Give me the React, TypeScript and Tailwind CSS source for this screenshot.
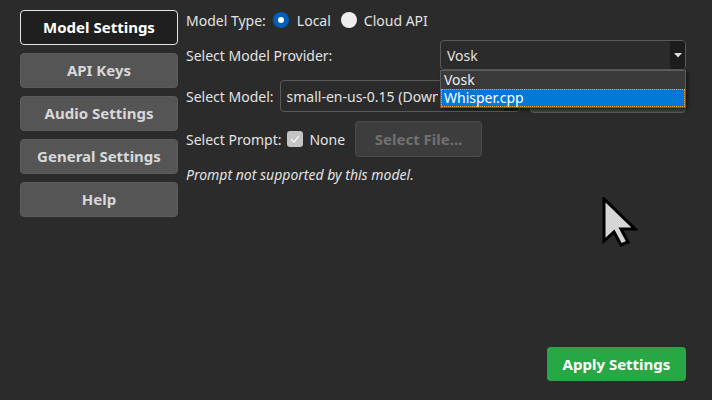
import React from "react";

const navItems = [
  "Model Settings",
  "API Keys",
  "Audio Settings",
  "General Settings",
  "Help",
];

const Cursor: React.FC = () => (
  <svg width="36" height="50" viewBox="0 0 36 50" className="absolute left-[602px] top-[197px]">
    <path
      d="M2 2 L2 44 L12 35 L19 48 L26 45 L19 32 L33 32 Z"
      fill="#d6d6d6"
      stroke="#000"
      strokeWidth="3"
      strokeLinejoin="miter"
    />
  </svg>
);

const App: React.FC = () => {
  return (
    <div
      className="relative flex w-[712px] h-[400px] overflow-hidden bg-[#2b2b2b] text-[14px] text-[#e2e2e2]"
      style={{ fontFamily: '"Noto Sans", "Open Sans", sans-serif' }}
    >
      {/* Sidebar */}
      <div className="flex flex-col gap-[8px] pt-[10px] pl-[20px] w-[178px] shrink-0">
        {navItems.map((item, i) => (
          <button
            key={item}
            className={
              i === 0
                ? "h-[35px] w-[158px] rounded-[4px] border border-[#e6e6e6] bg-[#1f1f1f] text-[15px] font-bold text-white"
                : "h-[35px] w-[158px] rounded-[4px] border border-[#5c5c5c] bg-[#555555] text-[15px] font-bold text-[#d8d8d8]"
            }
          >
            {item}
          </button>
        ))}
      </div>

      {/* Main */}
      <div className="flex flex-col flex-1 min-w-0 ml-[8px] pr-[26px] pt-[8px] pb-[19px]">
        {/* Model type */}
        <div className="flex items-center h-[24px] whitespace-nowrap">
          <span>Model Type:</span>
          <span className="ml-[7px] flex items-center justify-center w-[16px] h-[16px] rounded-full bg-[#005fb8]">
            <span className="w-[6px] h-[6px] rounded-full bg-white" />
          </span>
          <span className="ml-[8px]">Local</span>
          <span className="ml-[10px] w-[16px] h-[16px] rounded-full bg-[#eeeeee]" />
          <span className="ml-[7px]">Cloud API</span>
        </div>

        {/* Provider */}
        <div className="flex items-center mt-[8px] h-[30px] whitespace-nowrap">
          <span>Select Model Provider:</span>
          <div className="ml-auto flex items-center w-[246px] h-[30px] rounded-[4px] border border-[#5a5a5a] bg-[#2b2b2b]">
            <span className="flex-1 pl-[6px]">Vosk</span>
            <span className="flex items-center justify-center w-[15px] h-[28px] bg-[#1c1c1c] rounded-r-[3px]">
              <svg width="8" height="5" viewBox="0 0 8 5">
                <path d="M0 0 H8 L4 4.5 Z" fill="#ddd" />
              </svg>
            </span>
          </div>
        </div>

        {/* Model */}
        <div className="flex items-center mt-[10px] h-[32px] whitespace-nowrap">
          <span className="shrink-0">Select Model:</span>
          <div className="ml-[6px] flex-1 min-w-0 flex items-center h-[32px] rounded-[4px] border border-[#5a5a5a] bg-[#2b2b2b] overflow-hidden">
            <span className="pl-[6px] w-[157px] overflow-hidden">small-en-us-0.15 (Downloaded)</span>
            <span className="ml-auto w-[15px] h-[30px] bg-[#1c1c1c]" />
          </div>
          <span className="ml-[10px] shrink-0 w-[156px] h-[33px] rounded-[4px] border border-[#5a5a5a] bg-[#444444]" />
        </div>

        {/* Prompt */}
        <div className="flex items-center mt-[9px] h-[36px] whitespace-nowrap">
          <span>Select Prompt:</span>
          <span className="ml-[6px] flex items-center justify-center w-[16px] h-[16px] rounded-[3px] bg-[#c4c4c4]">
            <svg width="10" height="8" viewBox="0 0 10 8">
              <path d="M1 4 L4 7 L9 1" fill="none" stroke="#f4f4f4" strokeWidth="1.4" />
            </svg>
          </span>
          <span className="ml-[6px]">None</span>
          <button className="ml-[10px] w-[127px] h-[36px] rounded-[4px] border border-[#4c4c4c] bg-[#3d3d3d] text-[15px] font-bold text-[#707070]">
            Select File...
          </button>
        </div>

        <p className="mt-[7px] italic text-[14px] text-[#e2e2e2]">Prompt not supported by this model.</p>

        <div className="mt-auto flex justify-end">
          <button className="w-[139px] h-[34px] rounded-[4px] bg-[#28a745] text-[15px] font-bold text-white">
            Apply Settings
          </button>
        </div>
      </div>

      {/* Dropdown popup */}
      <div className="absolute left-[440px] top-[70px] w-[246px] h-[38px] border border-[#5c5c5c] bg-[#3a3a3a] shadow-[2px_2px_3px_rgba(0,0,0,0.5)]">
        <div className="h-[18px] leading-[18px] pl-[3px] text-[#eeeeee]">Vosk</div>
        <div className="h-[18px] leading-[16px] pl-[2px] bg-[#0078d7] text-white border border-dotted border-[#f0a040]">
          Whisper.cpp
        </div>
      </div>

      <Cursor />
    </div>
  );
};

export default App;
